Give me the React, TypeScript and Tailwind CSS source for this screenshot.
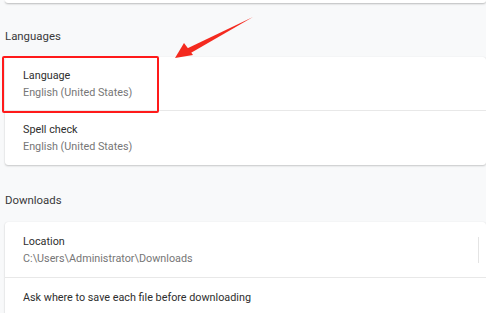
import React from "react";

function Row({ title, sub, last }: { title: string; sub?: string; last?: boolean }) {
  return (
    <div className={`flex items-center ${last ? "" : "border-b border-[#e8e8e8]"} ${sub ? "h-[54px]" : "h-[40px]"}`}>
      <div className="flex-1 pl-[18px] flex flex-col justify-center">
        <div className="text-[10.8px] leading-[17px] text-[#2e2e2e]">{title}</div>
        {sub && <div className="text-[10.8px] leading-[17px] text-[#767676]">{sub}</div>}
      </div>
    </div>
  );
}

export default function App() {
  return (
    <div
      className="relative w-[486px] h-[313px] overflow-hidden bg-[#f8f9fa]"
      style={{ fontFamily: "Roboto, 'Liberation Sans', sans-serif" }}
    >
      <div className="ml-[5px] h-[3px] bg-white rounded-b-[3px] shadow-[0_1px_2px_rgba(0,0,0,0.25)]" />
      <div className="ml-[5px] pt-[26px] h-[54px] text-[11.4px] leading-[14px] text-[#3a3a3a]">Languages</div>
      <div className="ml-[5px] bg-white rounded-[3px] shadow-[0_1px_2px_rgba(0,0,0,0.2),0_0_1px_rgba(0,0,0,0.1)]">
        <Row title="Language" sub="English (United States)" />
        <Row title="Spell check" sub="English (United States)" last />
      </div>
      <div className="ml-[5px] pt-[28px] h-[57px] text-[11.4px] leading-[14px] text-[#3a3a3a]">Downloads</div>
      <div className="ml-[5px] bg-white rounded-[3px] shadow-[0_1px_2px_rgba(0,0,0,0.2),0_0_1px_rgba(0,0,0,0.1)]">
        <div className="h-[56px] border-b border-[#e8e8e8] flex items-center">
          <div className="flex-1 pl-[18px] flex flex-col justify-center">
            <div className="text-[10.8px] leading-[17px] text-[#2e2e2e]">Location</div>
            <div className="text-[10.8px] leading-[17px] text-[#767676]">C:\Users\Administrator\Downloads</div>
          </div>
          <div className="w-px h-[26px] bg-[#e4e4e4] mr-[7px]" />
        </div>
        <div className="h-[40px] flex items-center pl-[18px] text-[10.8px] text-[#2e2e2e]">
          Ask where to save each file before downloading
        </div>
      </div>

      <div className="absolute left-[2px] top-[56px] w-[157px] h-[57px] border-2 border-[#ff1a1a] rounded-[2px]" />
      <svg className="absolute left-0 top-0" width="486" height="313" viewBox="0 0 486 313">
        <path d="M253 17 L186 49 L189 54 Z" fill="#f42a1f" />
        <path d="M175 58 L184 43 L193 55 Z" fill="#f42a1f" />
      </svg>
    </div>
  );
}
